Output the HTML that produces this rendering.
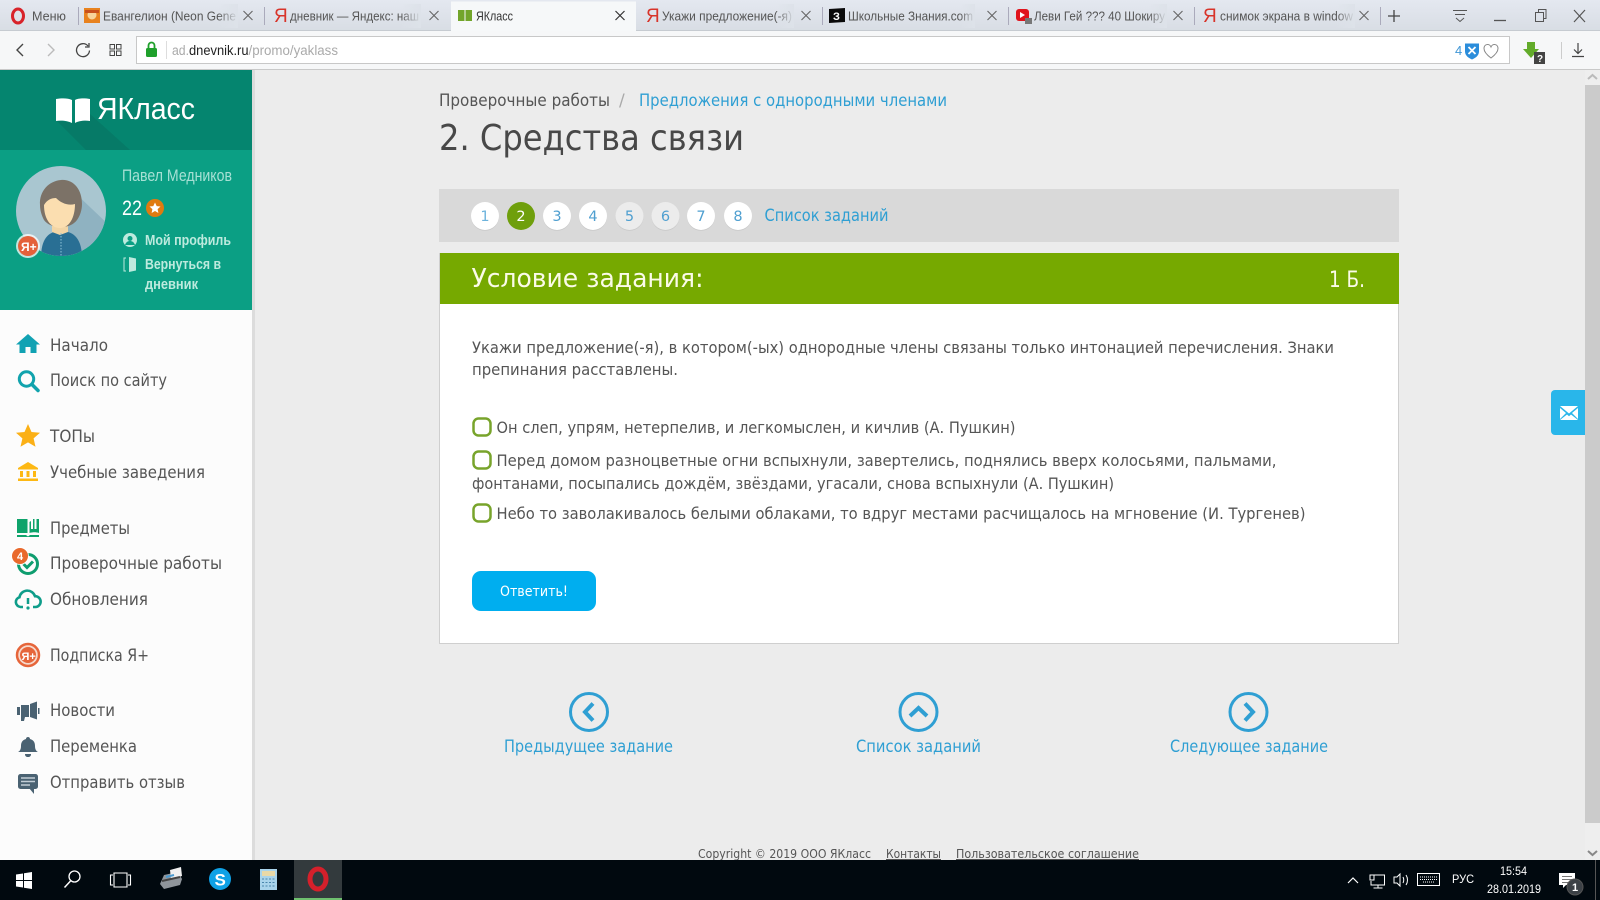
<!DOCTYPE html>
<html lang="ru"><head><meta charset="utf-8"><title>ЯКласс</title>
<style>
html,body{margin:0;padding:0;width:1600px;height:900px;overflow:hidden;background:#ececec}
svg{display:block}
text{font-family:"DejaVu Sans","Liberation Sans",sans-serif}
.l{font-family:"Liberation Sans",sans-serif}
.tab{font-family:"Liberation Sans",sans-serif;font-size:12.5px;fill:#555}
.nav{font-size:17px;fill:#555}
.body{font-size:16.2px;fill:#555}
.link{fill:#2f9fd3}
.x{stroke:#666;stroke-width:1.1;fill:none}
</style></head><body>
<svg width="1600" height="900" viewBox="0 0 1600 900" xmlns="http://www.w3.org/2000/svg">
<defs>
<linearGradient id="tb" x1="0" y1="0" x2="0" y2="1"><stop offset="0" stop-color="#e4e8f0"/><stop offset="1" stop-color="#d8dde4"/></linearGradient>
<linearGradient id="fd" x1="0" y1="0" x2="1" y2="0"><stop offset="0" stop-color="#dde2e9" stop-opacity="0"/><stop offset="1" stop-color="#dde2e9"/></linearGradient>
<clipPath id="av"><circle cx="61" cy="211" r="45"/></clipPath>
<clipPath id="pg"><rect x="0" y="0" width="1600" height="860"/></clipPath>
</defs>

<!-- page -->
<rect width="1600" height="900" fill="#ececec"/>

<!-- tab bar -->
<rect width="1600" height="31" fill="url(#tb)"/>
<rect y="30" width="1600" height="1" fill="#c6cbd1"/>
<ellipse cx="18" cy="16" rx="5.5" ry="7" fill="none" stroke="#d8232a" stroke-width="3"/>
<text class="tab" x="32" y="20.5" textLength="34" lengthAdjust="spacingAndGlyphs">Меню</text>
<rect x="78" y="7" width="1" height="18" fill="#aab"/>
<rect x="84" y="8" width="16" height="15" fill="#e8821e"/><circle cx="92" cy="15" r="4.5" fill="#f7d49a"/><path d="M85 10h14v3H85z" fill="#c9501c"/>
<text class="tab" x="103" y="20.5" textLength="133" lengthAdjust="spacingAndGlyphs">Евангелион (Neon Gene</text>
<rect x="218" y="4" width="20" height="24" fill="url(#fd)"/>
<path class="x" d="M243.500 11l9 9M252.500 11l-9 9"/>
<rect x="264" y="7" width="1" height="18" fill="#aab"/>
<text x="274" y="22" font-size="19" fill="#d8342a" class="l">Я</text>
<text class="tab" x="290" y="20.5" textLength="129" lengthAdjust="spacingAndGlyphs">дневник — Яндекс: наш</text>
<rect x="401" y="4" width="20" height="24" fill="url(#fd)"/>
<path class="x" d="M429.500 11l9 9M438.500 11l-9 9"/>
<!-- active tab -->
<path d="M451 31V1.500h185V31z" fill="#f6f8f9"/>
<path d="M458 10h6.500v11H458zM465.500 10h6.500v11h-6.500z" fill="#72a52a"/>
<text class="tab" x="476" y="20.500" textLength="37" lengthAdjust="spacingAndGlyphs" style="fill:#333">ЯКласс</text>
<path d="M615.500 11l9 9M624.500 11l-9 9" stroke="#333" stroke-width="1.200" fill="none"/>
<text x="646" y="22" font-size="19" fill="#d8342a" class="l">Я</text>
<text class="tab" x="662" y="20.500" textLength="130" lengthAdjust="spacingAndGlyphs">Укажи предложение(-я)</text>
<rect x="776" y="4" width="18" height="24" fill="url(#fd)"/>
<path class="x" d="M801.500 11l9 9M810.500 11l-9 9"/>
<rect x="822" y="7" width="1" height="18" fill="#aab"/>
<path d="M829 9l16-1v14l-16 1z" fill="#0a0a0a"/><text x="833" y="20" font-size="11" font-weight="700" fill="#fff" class="l">З</text>
<text class="tab" x="848" y="20.500" textLength="125" lengthAdjust="spacingAndGlyphs">Школьные Знания.com</text>
<rect x="960" y="4" width="15" height="24" fill="url(#fd)"/>
<path class="x" d="M987.500 11l9 9M996.500 11l-9 9"/>
<rect x="1008" y="7" width="1" height="18" fill="#aab"/>
<rect x="1016" y="9" width="13" height="12" rx="3" fill="#e0141c"/><path d="M1020 12l5 3-5 3z" fill="#fff"/><rect x="1025" y="18" width="7" height="6" fill="#777"/>
<text class="tab" x="1034" y="20.500" textLength="131" lengthAdjust="spacingAndGlyphs">Леви Гей ??? 40 Шокиру</text>
<rect x="1148" y="4" width="19" height="24" fill="url(#fd)"/>
<path class="x" d="M1173.500 11l9 9M1182.500 11l-9 9"/>
<rect x="1194" y="7" width="1" height="18" fill="#aab"/>
<text x="1203" y="22" font-size="19" fill="#d8342a" class="l">Я</text>
<text class="tab" x="1220" y="20.500" textLength="133" lengthAdjust="spacingAndGlyphs">снимок экрана в window</text>
<rect x="1336" y="4" width="19" height="24" fill="url(#fd)"/>
<path class="x" d="M1359.500 11l9 9M1368.500 11l-9 9"/>
<rect x="1380" y="7" width="1" height="18" fill="#aab"/>
<path d="M1394 10v12M1388 16h12" stroke="#444" stroke-width="1.300"/>
<path d="M1453 10.500h14M1455 14.500h10M1456 18l4 3.500 4-3.500" stroke="#555" stroke-width="1" fill="none"/>
<path d="M1494 20.500h12" stroke="#555" stroke-width="1.300"/>
<path d="M1535.500 12.500h8v9h-8zM1538.500 12.500V9.500h7.500v9h-2.500" stroke="#555" fill="none"/>
<path d="M1574 10l11 12M1585 10l-11 12" stroke="#555" stroke-width="1.200" fill="none"/>

<!-- toolbar -->
<rect y="31" width="1600" height="38" fill="#f6f7f8"/>
<rect y="69" width="1600" height="1" fill="#c9c9c9"/>
<path d="M23 44l-6 6 6 6" stroke="#444" stroke-width="1.400" fill="none"/>
<path d="M48 44l6 6-6 6" stroke="#bbb" stroke-width="1.400" fill="none"/>
<path d="M88 46a6.500 6.500 0 1 0 1.500 4.500M89 43v4h-4" stroke="#444" stroke-width="1.300" fill="none"/>
<path d="M110 44.500h4.500v4.500H110zM116.500 44.500h4.500v4.500h-4.500zM110 51h4.500v4.500H110zM116.500 51h4.500v4.500h-4.500z" stroke="#444" fill="none"/>
<rect x="136.500" y="36.500" width="1373" height="27" fill="#fff" stroke="#c8c8c8"/>
<rect x="146" y="48" width="11" height="9" rx="1.500" fill="#1fa02b"/><path d="M148.500 48v-2.500a3 3 0 0 1 6 0V48" stroke="#1fa02b" stroke-width="1.800" fill="none"/>
<rect x="166" y="41" width="1" height="18" fill="#ddd"/>
<text class="l" x="172" y="55" font-size="13.500" fill="#aaa" textLength="17" lengthAdjust="spacingAndGlyphs">ad.</text>
<text class="l" x="189" y="55" font-size="13.500" fill="#222" textLength="59.500" lengthAdjust="spacingAndGlyphs">dnevnik.ru</text>
<text class="l" x="248.500" y="55" font-size="13.500" fill="#aaa" textLength="89.500" lengthAdjust="spacingAndGlyphs">/promo/yaklass</text>
<text class="l" x="1455" y="55" font-size="13" fill="#3f96d6">4</text>
<path d="M1465 43.500h14v8c0 4-3.500 6.500-7 8-3.500-1.500-7-4-7-8z" fill="#2b8ddb"/><path d="M1468.500 47l7 7M1475.500 47l-7 7" stroke="#fff" stroke-width="1.800"/>
<path d="M1491 58c-4-3-7-6-7-9.500 0-4.500 5.500-5.500 7-1.500 1.500-4 7-3 7 1.500 0 3.500-3 6.500-7 9.500z" fill="#fff" stroke="#888"/>
<path d="M1527 42h8v7h4l-8 9-8-9h4z" fill="#62ab2a"/>
<rect x="1534" y="52" width="11" height="12" fill="#444"/><text class="l" x="1537" y="62" font-size="10" font-weight="700" fill="#fff">?</text>
<rect x="1561" y="42" width="1" height="17" fill="#ccc"/>
<path d="M1578 43v10M1574 49.500l4 4 4-4M1572 56.500h12" stroke="#444" stroke-width="1.200" fill="none"/>

<g clip-path="url(#pg)">
<!-- sidebar -->
<rect y="70" width="252" height="790" fill="#fcfcfc"/>
<rect x="252" y="70" width="3" height="790" fill="#dcdcdc"/>
<rect y="70" width="252" height="80" fill="#05856f"/>
<path d="M56 120L73 123 90 116v-2L130 150H86z" fill="#067a67"/>
<rect y="150" width="252" height="160" fill="#0b9f84"/>
<path d="M56 99c6-1 12-1 16 1v23c-4-2-10-3-16-2zM90 99c-5-1-12-1-15 1v23c3-2 10-3 15-2z" fill="#fff"/>
<text x="97" y="119" font-size="31" fill="#fff" textLength="98" lengthAdjust="spacingAndGlyphs" class="l">ЯКласс</text>

<circle cx="61" cy="211" r="45" fill="#a9c6d0"/>
<g clip-path="url(#av)">
<path d="M72 190l40 38v30H40z" fill="#8fb2c1"/>
<path d="M41 258c0-20 8-27 20-27s21 7 21 27z" fill="#296f94"/>
<path d="M52 224h16v8l-8 3-8-3z" fill="#f2d5a5"/>
<path d="M40 205c-1-14 9-24 21-25 13-1 21 10 21 24 0 6-2 12-5 16-3 4-8 7-16 7-9 0-14-3-17-7-2-4-4-9-4-15z" fill="#7c7267"/>
<path d="M44 205c3-5 7-7 12-7 5 5 12 8 19 6 0 14-6 24-15 24-10 0-16-10-16-23z" fill="#fbdeb0"/>
<path d="M61 233v23" stroke="#8fc3d8" stroke-dasharray="1.500 1.500"/>
</g>
<circle cx="28" cy="246" r="12" fill="#fff" opacity=".75"/><circle cx="28" cy="246" r="10" fill="#e4613a"/>
<text class="l" x="21" y="251" font-size="12" font-weight="700" fill="#fff">Я+</text>

<text class="l" x="122" y="181" font-size="17" fill="#a6e0d4" textLength="110" lengthAdjust="spacingAndGlyphs">Павел Медников</text>
<text class="l" x="122" y="215" font-size="21" fill="#fff" textLength="20" lengthAdjust="spacingAndGlyphs">22</text>
<circle cx="155" cy="208" r="9" fill="#e07b10"/>
<path d="M155 202.500l1.700 3.600 3.800.4-2.900 2.600.8 3.900-3.400-2-3.400 2 .8-3.900-2.900-2.600 3.800-.4z" fill="#fff"/>
<circle cx="130" cy="240" r="7" fill="#bdeade"/><circle cx="130" cy="238.500" r="2.500" fill="#0b9f84"/><path d="M125 245c1-3 3-4 5-4s4 1 5 4z" fill="#0b9f84"/>
<text class="l" x="145" y="245" font-size="15" font-weight="700" fill="#bdeade" textLength="86" lengthAdjust="spacingAndGlyphs">Мой профиль</text>
<path d="M126 258h-2v13h2" stroke="#bdeade" fill="none"/><path d="M129 257l7 1.500v12l-7 1.500z" fill="#bdeade"/>
<text class="l" x="145" y="269" font-size="15" font-weight="700" fill="#bdeade" textLength="76" lengthAdjust="spacingAndGlyphs">Вернуться в</text>
<text class="l" x="145" y="289" font-size="15" font-weight="700" fill="#bdeade" textLength="53" lengthAdjust="spacingAndGlyphs">дневник</text>

<!-- nav icons -->
<path d="M28 334l12 10.500h-3.500V353h-6v-6h-5v6h-6v-8.500H16z" fill="#11a2b3"/>
<circle cx="26.500" cy="379" r="7.200" fill="none" stroke="#11a3ad" stroke-width="3"/><path d="M32 384.500l6 6" stroke="#11a3ad" stroke-width="3.500" stroke-linecap="round"/>
<path d="M28 424l3.500 8 8.500.8-6.400 5.600 1.900 8.400-7.500-4.400-7.500 4.400 1.900-8.400-6.400-5.600 8.500-.8z" fill="#fbb016"/>
<path d="M28 462l10 6v1.500H18V468zM20 471h3v6h-3zM26.500 471h3v6h-3zM33 471h3v6h-3zM18 478.500h20v2.500H18z" fill="#fdb813"/>
<path d="M17 519h10.500v14H17zM29.500 522v11c3-1 7-1 9.500 0v-14h-2.500v10h-2v-10h-1.500v10h-2v-8z" fill="#0ea36b"/><path d="M17 535h9l2 1.500 2-1.500h9v2H17z" fill="#0ea36b"/>
<circle cx="28" cy="564" r="9.500" fill="none" stroke="#0e9d6f" stroke-width="3"/>
<path d="M23.500 564l3.500 3.500 6-6" stroke="#0e9d6f" stroke-width="3" fill="none"/>
<circle cx="20" cy="556" r="9" fill="#fff" opacity=".8"/><circle cx="20" cy="556" r="8" fill="#e9692c"/>
<text class="l" x="17" y="560" font-size="11" font-weight="700" fill="#fff">4</text>
<path d="M23 607h-2.500a5 5 0 0 1-1-9.800 8 8 0 0 1 15.500-1 5.400 5.400 0 0 1 .5 10.800H33" fill="none" stroke="#0e9d8a" stroke-width="2.600"/>
<path d="M28 598v6" stroke="#0e9d8a" stroke-width="2.500"/><circle cx="28" cy="608" r="1.600" fill="#0e9d8a"/>
<circle cx="28" cy="655" r="11" fill="#f6d9cc" stroke="#e6653a" stroke-width="2.500"/><circle cx="28" cy="655" r="8" fill="#e6653a"/>
<text class="l" x="21.500" y="660" font-size="11" font-weight="700" fill="#fff">Я+</text>
<path d="M17 707h3v8h-3zM21 705h8v12h-4l-1 4h-3zM30 704l7-2.500v18l-7-2.500zM38 708h1.500v6H38z" fill="#4a6272"/>
<path d="M28 737c2 0 2 2 2 2 4 1 5 4 5 7 0 3 1 5 3 6H18c2-1 3-3 3-6 0-3 1-6 5-7 0 0 0-2 2-2zM25 754h6c0 2-1 3-3 3s-3-1-3-3z" fill="#4a6272"/>
<rect x="18" y="774" width="20" height="15" rx="2.500" fill="#4a6272"/><path d="M29 788l5 0 0 6z" fill="#4a6272"/>
<path d="M21 778h14M21 781.500h14M21 785h9" stroke="#c3ced6" stroke-width="1.400"/>

<!-- nav text -->
<text class="nav" x="50" y="351" textLength="58" lengthAdjust="spacingAndGlyphs">Начало</text>
<text class="nav" x="50" y="386" textLength="117" lengthAdjust="spacingAndGlyphs">Поиск по сайту</text>
<text class="nav" x="50" y="442" textLength="45" lengthAdjust="spacingAndGlyphs">ТОПы</text>
<text class="nav" x="50" y="478" textLength="155" lengthAdjust="spacingAndGlyphs">Учебные заведения</text>
<text class="nav" x="50" y="534" textLength="80" lengthAdjust="spacingAndGlyphs">Предметы</text>
<text class="nav" x="50" y="569" textLength="172" lengthAdjust="spacingAndGlyphs">Проверочные работы</text>
<text class="nav" x="50" y="605" textLength="98" lengthAdjust="spacingAndGlyphs">Обновления</text>
<text class="nav" x="50" y="661" textLength="99" lengthAdjust="spacingAndGlyphs">Подписка Я+</text>
<text class="nav" x="50" y="716" textLength="65" lengthAdjust="spacingAndGlyphs">Новости</text>
<text class="nav" x="50" y="752" textLength="87" lengthAdjust="spacingAndGlyphs">Переменка</text>
<text class="nav" x="50" y="788" textLength="135" lengthAdjust="spacingAndGlyphs">Отправить отзыв</text>

<!-- heading -->
<text x="439" y="106" font-size="17" fill="#555" textLength="171" lengthAdjust="spacingAndGlyphs">Проверочные работы</text>
<text x="619" y="106" font-size="17" fill="#aaa">/</text>
<text class="link" x="639" y="106" font-size="17" textLength="308" lengthAdjust="spacingAndGlyphs">Предложения с однородными членами</text>
<text x="439" y="150" font-size="36" fill="#484848" textLength="305" lengthAdjust="spacingAndGlyphs">2. Средства связи</text>

<!-- pager -->
<rect x="439" y="189" width="960" height="53" fill="#d9d9d9"/>
<g font-size="14.500" text-anchor="middle">
<g fill="#c9c9c9"><circle cx="485" cy="216.800" r="14"/><circle cx="557" cy="216.800" r="14"/><circle cx="593" cy="216.800" r="14"/><circle cx="629.500" cy="216.800" r="14"/><circle cx="665.500" cy="216.800" r="14"/><circle cx="701" cy="216.800" r="14"/><circle cx="738" cy="216.800" r="14"/></g>
<circle cx="485" cy="216" r="14" fill="#fff"/><text x="485" y="221" fill="#6db3dc">1</text>
<circle cx="521" cy="216" r="14" fill="#6f9f0c"/><text x="521" y="221" fill="#fff">2</text>
<circle cx="557" cy="216" r="14" fill="#fff"/><text x="557" y="221" fill="#4f9fd0">3</text>
<circle cx="593" cy="216" r="14" fill="#fff"/><text x="593" y="221" fill="#4f9fd0">4</text>
<circle cx="629.500" cy="216" r="14" fill="#ececec"/><text x="629.500" y="221" fill="#4f9fd0">5</text>
<circle cx="665.500" cy="216" r="14" fill="#ececec"/><text x="665.500" y="221" fill="#4f9fd0">6</text>
<circle cx="701" cy="216" r="14" fill="#fff"/><text x="701" y="221" fill="#4f9fd0">7</text>
<circle cx="738" cy="216" r="14" fill="#fff"/><text x="738" y="221" fill="#4f9fd0">8</text>
</g>
<text class="link" x="764.500" y="221" font-size="16.500" textLength="124" lengthAdjust="spacingAndGlyphs">Список заданий</text>

<!-- panel -->
<rect x="439.500" y="253.500" width="959" height="390" fill="#fff" stroke="#cfcfcf"/>
<rect x="440" y="253" width="959" height="51" fill="#76a900"/>
<text x="471.500" y="287" font-size="26" fill="#fbfbe8" textLength="232" lengthAdjust="spacingAndGlyphs">Условие задания:</text>
<text x="1329" y="287" font-size="22" fill="#fbfbe8" textLength="36" lengthAdjust="spacingAndGlyphs">1 Б.</text>

<text class="body" x="472" y="353" textLength="862" lengthAdjust="spacingAndGlyphs">Укажи предложение(-я), в котором(-ых) однородные члены связаны только интонацией перечисления. Знаки</text>
<text class="body" x="472" y="375" textLength="206" lengthAdjust="spacingAndGlyphs">препинания расставлены.</text>

<rect x="473.500" y="418.500" width="17" height="17" rx="5" fill="#fff" stroke="#78a42b" stroke-width="2.500"/>
<text class="body" x="496.500" y="433" textLength="519" lengthAdjust="spacingAndGlyphs">Он слеп, упрям, нетерпелив, и легкомыслен, и кичлив (А. Пушкин)</text>
<rect x="473.500" y="451.500" width="17" height="17" rx="5" fill="#fff" stroke="#78a42b" stroke-width="2.500"/>
<text class="body" x="496.500" y="466" textLength="780" lengthAdjust="spacingAndGlyphs">Перед домом разноцветные огни вспыхнули, завертелись, поднялись вверх колосьями, пальмами,</text>
<text class="body" x="472" y="489" textLength="642" lengthAdjust="spacingAndGlyphs">фонтанами, посыпались дождём, звёздами, угасали, снова вспыхнули (А. Пушкин)</text>
<rect x="473.500" y="504.500" width="17" height="17" rx="5" fill="#fff" stroke="#78a42b" stroke-width="2.500"/>
<text class="body" x="496.500" y="519" textLength="809" lengthAdjust="spacingAndGlyphs">Небо то заволакивалось белыми облаками, то вдруг местами расчищалось на мгновение (И. Тургенев)</text>

<rect x="472" y="571" width="124" height="40" rx="9" fill="#00aeef"/>
<text x="500" y="596" font-size="14.500" fill="#fff" textLength="68" lengthAdjust="spacingAndGlyphs">Ответить!</text>

<!-- bottom nav -->
<g fill="none" stroke="#2f9fd3" stroke-width="3">
<circle cx="589" cy="712" r="18.500"/><circle cx="918.500" cy="712" r="18.500"/><circle cx="1248.500" cy="712" r="18.500"/>
</g>
<g fill="none" stroke="#2f9fd3" stroke-width="4">
<path d="M593 703.500l-8 8.500 8 8.500"/><path d="M910 716l8.500-8 8.500 8"/><path d="M1245 703.500l8 8.500-8 8.500"/>
</g>
<text class="link" x="504" y="752" font-size="17" textLength="169" lengthAdjust="spacingAndGlyphs">Предыдущее задание</text>
<text class="link" x="856" y="752" font-size="17" textLength="125" lengthAdjust="spacingAndGlyphs">Список заданий</text>
<text class="link" x="1170" y="752" font-size="17" textLength="158" lengthAdjust="spacingAndGlyphs">Следующее задание</text>

<text x="698" y="858" font-size="12.500" fill="#555" textLength="173" lengthAdjust="spacingAndGlyphs">Copyright © 2019 ООО ЯКласс</text>
<text x="886" y="858" font-size="12.500" fill="#555" text-decoration="underline" textLength="55" lengthAdjust="spacingAndGlyphs">Контакты</text>
<text x="956" y="858" font-size="12.500" fill="#555" text-decoration="underline" textLength="183" lengthAdjust="spacingAndGlyphs">Пользовательское соглашение</text>

<!-- scrollbar + mail -->
<rect x="1585" y="70" width="15" height="790" fill="#eeeeee"/>
<rect x="1585" y="85" width="15" height="738" fill="#cbcbcb"/>
<path d="M1588 79l4.500-4 4.500 4" stroke="#bbb" stroke-width="2" fill="none"/>
<path d="M1588 851l4.500 4 4.500-4" stroke="#888" stroke-width="2" fill="none"/>
<path d="M1555 390h30v45h-30a4 4 0 0 1-4-4v-37a4 4 0 0 1 4-4z" fill="#29b6ea"/>
<path d="M1560 406h18l-9 7.500zM1560 408l6 5-6 6zM1578 408l-6 5 6 6zM1560 420l7-5.500 2 1.800 2-1.800 7 5.500z" fill="#fff"/>
</g>

<!-- taskbar -->
<rect y="860" width="1600" height="40" fill="#01090f"/>
<path d="M16 874.500l7-1v6.500h-7zM24 873.300l8-1.300v8h-8zM16 881h7v6.500l-7-1zM24 881h8v8l-8-1.300z" fill="#fff"/>
<circle cx="74.500" cy="876.500" r="5.500" fill="none" stroke="#fff" stroke-width="1.300"/><path d="M70.500 881l-6 6.500" stroke="#fff" stroke-width="1.500"/>
<path d="M114 873h13v14h-13zM113 875h-2.500v10h2.500M128 875h2.500v10H128" fill="none" stroke="#fff" stroke-width="1.100"/>
<path d="M160 884l4-9 14-3 4 7-2 6-16 4z" fill="#8f959b"/><path d="M170 870l11-3 1 9-11 3z" fill="#f0f0f0"/><path d="M162 881l18-4" stroke="#444" stroke-width="2"/><path d="M166 877l8-2" stroke="#4a9ad0" stroke-width="2"/>
<circle cx="220" cy="879" r="11" fill="#0fa1e6"/><text class="l" x="214.500" y="885.500" font-size="17" font-weight="700" fill="#fff">S</text>
<rect x="260" y="869" width="17" height="21" fill="#a9d4ec"/><rect x="262" y="871" width="13" height="5" fill="#e9d9a8"/>
<path d="M262 879h13M262 882.500h13M262 886h13" stroke="#4a86ad" stroke-dasharray="2 1.500"/>
<rect x="294" y="860" width="48" height="40" fill="#333a3d"/><rect x="294" y="898" width="48" height="2" fill="#6fc06f"/>
<ellipse cx="318" cy="879" rx="8" ry="10" fill="none" stroke="#d5202b" stroke-width="5"/>

<path d="M1348 883l5-5 5 5" stroke="#fff" stroke-width="1.200" fill="none"/>
<path d="M1370 875h4v5h-4zM1374 875h10.500v10H1371v-4M1378 885v3M1373.500 888h9" stroke="#fff" fill="none"/>
<path d="M1394 877h3l3-3v12l-3-3h-3zM1403 877c1 2 1 4 0 6M1406 875c2 3 2 7 0 10" stroke="#fff" fill="none"/>
<rect x="1417.500" y="873.500" width="22" height="12" fill="none" stroke="#fff"/><path d="M1420 877h17M1420 879.500h17M1423 882h11" stroke="#fff" stroke-dasharray="1 1"/>
<text class="l" x="1452" y="883" font-size="11.500" fill="#fff" textLength="22" lengthAdjust="spacingAndGlyphs">РУС</text>
<text class="l" x="1500" y="875" font-size="12" fill="#fff" textLength="27" lengthAdjust="spacingAndGlyphs">15:54</text>
<text class="l" x="1487" y="893" font-size="12" fill="#fff" textLength="54" lengthAdjust="spacingAndGlyphs">28.01.2019</text>
<path d="M1559 873h16v12h-9l-3 3v-3h-4z" fill="#fff"/>
<path d="M1562 876.500h10M1562 879.500h10M1562 882.500h6" stroke="#777"/>
<circle cx="1575" cy="887" r="8" fill="#3c4146" stroke="#555"/>
<text class="l" x="1572" y="891" font-size="11" font-weight="700" fill="#fff">1</text>
<rect x="1595" y="860" width="1" height="40" fill="#555"/>
</svg>
</body></html>
